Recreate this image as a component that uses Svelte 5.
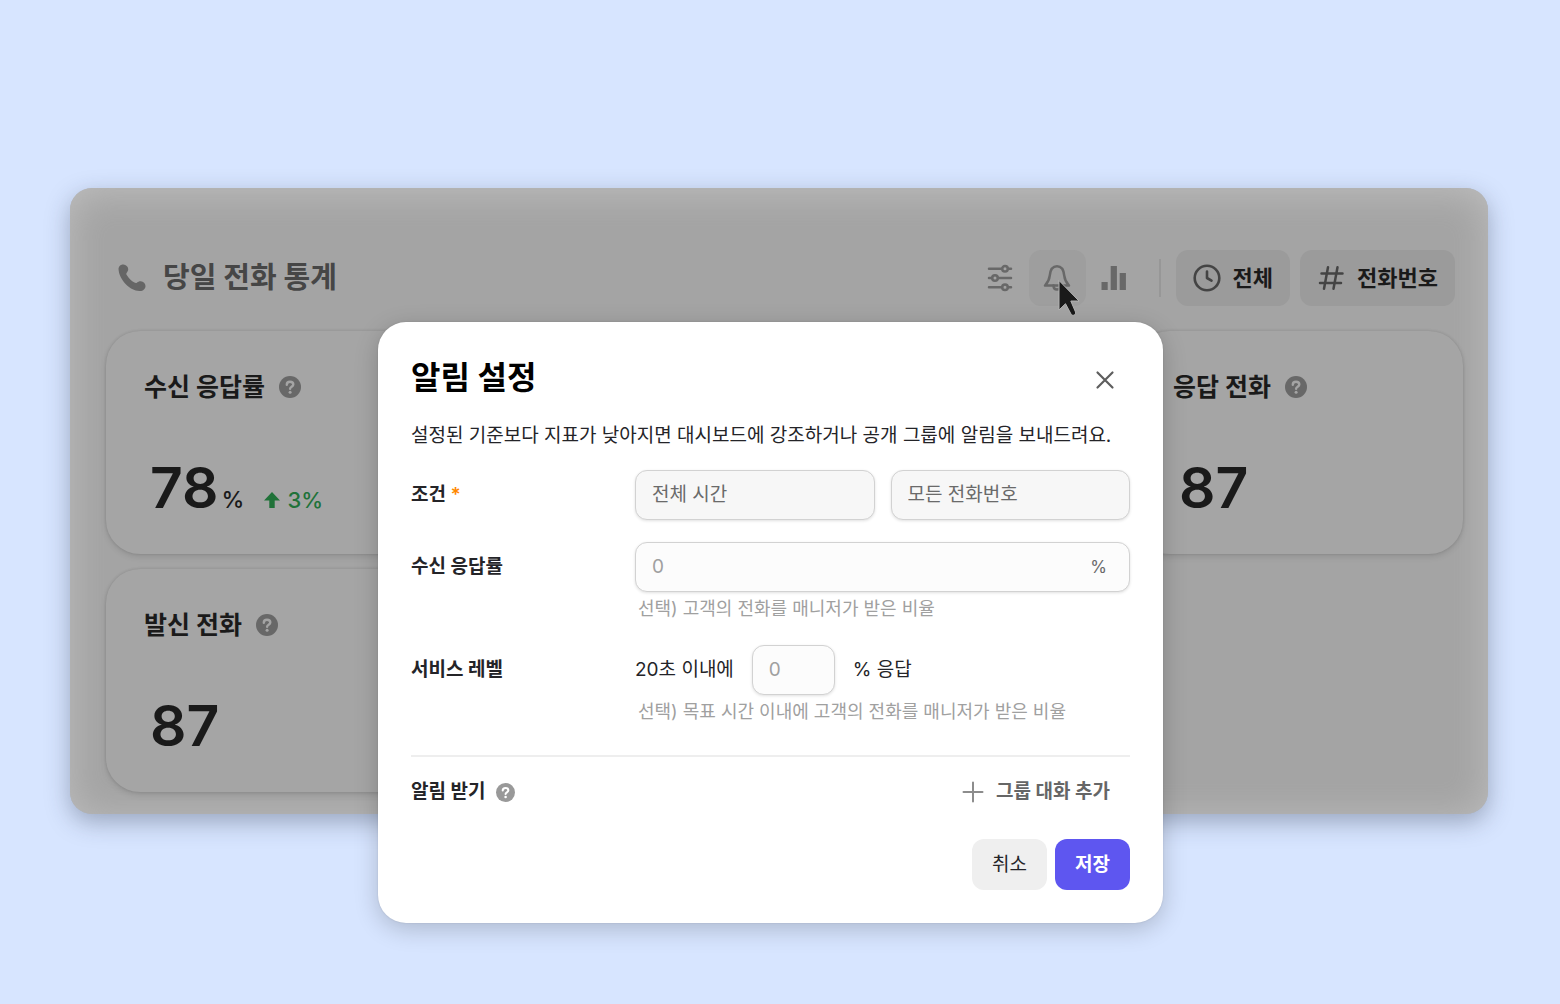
<script lang="ts">
  type Stat = { title: string; value: string; unit?: string; change?: string; column: number };

  const stats: Stat[] = [
    { title: "수신 응답률", value: "78", unit: "%", change: "3%", column: 1 },
    { title: "응답 전화", value: "87", column: 4 },
    { title: "발신 전화", value: "87", column: 1 },
  ];

  let answerRate = $state("");
  let serviceLevel = $state("");
</script>

{#snippet help()}
  <svg class="help" viewBox="0 0 22 22" aria-hidden="true">
    <circle cx="11" cy="11" r="11" fill="currentColor" />
    <path class="mark" d="M7.8 8.7C7.8 6.8 9.2 5.7 11 5.7s3.3 1.1 3.3 2.8c0 2.2-3.2 2.3-3.2 4.3" />
    <circle class="dot" cx="11.1" cy="16.2" r="1.5" />
  </svg>
{/snippet}

<main>
  <section class="board">
    <header>
      <h1>
        <svg width="28" height="28" viewBox="0 0 28 28" aria-hidden="true">
          <path
            fill="currentColor"
            d="M.6 6C.2 2.6 2.6.4 5.4.6c2.6.2 4.7 2.1 4.8 4.5.1 1.7-.7 2.6-1.6 3.9-.5.8-.3 1.4.3 2.3 2 3.1 4.5 5.6 7.5 7.3 1 .6 1.7.7 2.5.1 1.3-.9 2.2-1.5 3.9-1.4 2.6.2 4.7 2.2 4.7 4.8 0 3-2.5 5.2-6 5C11.5 26.5 1.5 15.8.6 6z"
          />
        </svg>
        당일 전화 통계
      </h1>
      <div class="tools">
        <button class="icon" aria-label="필터">
          <svg width="28" height="28" viewBox="0 0 28 28" fill="none" stroke="currentColor" stroke-width="2.5" stroke-linecap="round">
            <path d="M3 4.8h13M22 4.8h3M3 14h3M12 14h13M3 23.2h13M22 23.2h3" />
            <circle cx="19" cy="4.8" r="2.8" />
            <circle cx="9" cy="14" r="2.8" />
            <circle cx="19" cy="23.2" r="2.8" />
          </svg>
        </button>
        <button class="icon active" aria-label="알림 설정">
          <svg width="30" height="30" viewBox="0 0 30 30" fill="none" stroke="currentColor" stroke-width="2.5" stroke-linejoin="round" stroke-linecap="round">
            <path d="M3 22.5h24c-2.8-3-4.3-5.8-4.7-9.7C21.8 7.3 19.6 3.2 15 3.2s-6.8 4.1-7.3 9.6C7.3 16.7 5.8 19.5 3 22.5z" />
            <path d="M11.5 22.5c0 2.5 1.5 4 3.5 4s3.5-1.5 3.5-4" />
          </svg>
          <svg class="pointer" width="24" height="38" viewBox="0 0 24 38" aria-hidden="true">
            <path d="M2 1.5V31l6.5-6.3 5.6 10.5c1.7 2.3 5.2.6 4.4-2.2L13.8 22H22z" fill="#1a1a1a" stroke="#b4b4b4" stroke-width="1" />
          </svg>
        </button>
        <button class="icon" aria-label="통계">
          <svg width="28" height="28" viewBox="0 0 28 28" fill="currentColor">
            <path d="M1.5 18h6.2v8H1.5zM10.7 2h6.2v24h-6.2zM19.7 9h6.2v17h-6.2z" />
          </svg>
        </button>
        <span class="divider"></span>
        <button class="pill">
          <svg width="28" height="28" viewBox="0 0 28 28" fill="none" stroke="currentColor" stroke-width="2.6" stroke-linecap="round" stroke-linejoin="round">
            <circle cx="14" cy="14" r="12.3" />
            <path d="M14 7.5V14l4.5 2.6" />
          </svg>
          전체
        </button>
        <button class="pill">
          <svg width="28" height="28" viewBox="0 0 28 28" fill="none" stroke="currentColor" stroke-width="2.5" stroke-linecap="round">
            <path d="M11 3.2 7 24.8M20.5 3.2 16.5 24.8M4.5 9.5h21M3 19h21" />
          </svg>
          전화번호
        </button>
      </div>
    </header>

    <div class="cards">
      {#each stats as stat}
        <article style="grid-column: {stat.column}">
          <h2>{stat.title}{@render help()}</h2>
          <p class="figure">
            <span class="value">{stat.value}</span>
            {#if stat.unit}
              <span class="unit">{stat.unit}</span>
            {/if}
            {#if stat.change}
              <span class="change">
                <svg width="16" height="16" viewBox="0 0 16 16" aria-hidden="true">
                  <path d="M8 0l8 8.5h-5.3V16H5.3V8.5H0z" fill="currentColor" />
                </svg>
                {stat.change}
              </span>
            {/if}
          </p>
        </article>
      {/each}
    </div>
  </section>

  <div class="modal" role="dialog" aria-labelledby="modal-title">
    <div class="modal-head">
      <h2 id="modal-title">알림 설정</h2>
      <button class="close" aria-label="닫기">
        <svg width="20" height="20" viewBox="0 0 20 20" fill="none" stroke="currentColor" stroke-width="2.2" stroke-linecap="round">
          <path d="M2.5 2.5l15 15M17.5 2.5l-15 15" />
        </svg>
      </button>
    </div>
    <p class="intro">설정된 기준보다 지표가 낮아지면 대시보드에 강조하거나 공개 그룹에 알림을 보내드려요.</p>

    <form onsubmit={(event) => event.preventDefault()}>
      <div class="row">
        <label for="period">조건 <b>*</b></label>
        <div class="pair">
          <select id="period">
            <option>전체 시간</option>
          </select>
          <select aria-label="전화번호">
            <option>모든 전화번호</option>
          </select>
        </div>
      </div>

      <div class="row">
        <label for="rate">수신 응답률</label>
        <div>
          <div class="field">
            <input id="rate" type="text" placeholder="0" bind:value={answerRate} />
            <span>%</span>
          </div>
          <p class="hint">선택) 고객의 전화를 매니저가 받은 비율</p>
        </div>
      </div>

      <div class="row">
        <label for="level">서비스 레벨</label>
        <div>
          <div class="level">
            <span>20초 이내에</span>
            <div class="field small">
              <input id="level" type="text" placeholder="0" bind:value={serviceLevel} />
            </div>
            <span>% 응답</span>
          </div>
          <p class="hint">선택) 목표 시간 이내에 고객의 전화를 매니저가 받은 비율</p>
        </div>
      </div>

      <div class="receive">
        <h3>알림 받기{@render help()}</h3>
        <button class="add" type="button">
          <svg width="22" height="22" viewBox="0 0 22 22" fill="none" stroke="#8c8c8c" stroke-width="2" stroke-linecap="round">
            <path d="M11 1.5v19M1.5 11h19" />
          </svg>
          그룹 대화 추가
        </button>
      </div>

      <div class="actions">
        <button class="cancel" type="button">취소</button>
        <button class="save" type="submit">저장</button>
      </div>
    </form>
  </div>
</main>

<style>
  :global(body) {
    margin: 0;
    background: #d7e5ff;
  }

  main,
  main * {
    box-sizing: border-box;
  }

  main {
    position: relative;
    min-height: 100vh;
    padding: 188px 72px 80px 70px;
    font-family: Inter, "Noto Sans CJK KR", sans-serif;
    font-size: 19px;
    line-height: 28px;
    color: #242428;
  }

  h1,
  h2,
  h3,
  p {
    margin: 0;
  }

  svg {
    display: block;
    flex: none;
  }

  button,
  input,
  select {
    font: inherit;
    color: inherit;
  }

  button {
    border: none;
    background: none;
    padding: 0;
    cursor: pointer;
  }

  .board {
    padding: 62px 25px 22px 36px;
    border-radius: 22px;
    background: #a4a4a4;
    box-shadow:
      inset 0 4px 36px #bebebe,
      0 8px 24px rgba(40, 50, 70, 0.35);
    color: #1a1a1a;
  }

  header {
    display: flex;
    align-items: center;
    justify-content: space-between;
    padding: 0 8px 0 12px;
    margin-bottom: 25px;
  }

  h1 {
    display: flex;
    align-items: center;
    gap: 17px;
    font-size: 29px;
    line-height: 40px;
    font-weight: 700;
    color: #464646;
  }

  h1 svg {
    color: #666;
  }

  .tools {
    display: flex;
    align-items: center;
  }

  .icon {
    position: relative;
    display: flex;
    align-items: center;
    justify-content: center;
    width: 57px;
    height: 56px;
    border-radius: 12px;
    color: #686868;
  }

  .active {
    background: #9e9e9e;
  }

  .pointer {
    position: absolute;
    left: 28px;
    top: 29px;
  }

  .divider {
    width: 2px;
    height: 38px;
    margin: 0 15px 0 16px;
    background: #979797;
  }

  .pill {
    display: flex;
    align-items: center;
    gap: 12px;
    height: 56px;
    padding: 0 17px;
    border-radius: 12px;
    background: #9b9b9b;
    font-size: 22px;
    font-weight: 700;
  }

  .pill + .pill {
    margin-left: 10px;
  }

  .pill svg {
    color: #444;
  }

  .cards {
    display: grid;
    grid-template-columns: repeat(4, 1fr);
    gap: 15px;
  }

  article {
    height: 223px;
    padding: 36px 38px;
    border-radius: 34px;
    background: #a5a5a5;
    box-shadow:
      0 0 3px rgba(0, 0, 0, 0.14),
      0 3px 6px rgba(0, 0, 0, 0.1);
  }

  article h2 {
    display: flex;
    align-items: center;
    gap: 14px;
    font-size: 25px;
    line-height: 40px;
    font-weight: 700;
  }

  .help {
    width: 22px;
    height: 22px;
    color: #686868;
  }

  .mark {
    fill: none;
    stroke: #a4a4a4;
    stroke-width: 2.4;
    stroke-linecap: round;
  }

  .dot {
    fill: #a4a4a4;
  }

  .figure {
    display: flex;
    align-items: baseline;
    margin-top: 46px;
    padding-left: 6px;
    line-height: 70px;
  }

  .value {
    font-size: 57px;
    font-weight: 600;
  }

  .unit {
    margin-left: 3px;
    font-size: 23px;
    font-weight: 500;
  }

  .change {
    display: flex;
    align-items: center;
    gap: 7px;
    margin-left: 20px;
    font-size: 22px;
    line-height: 30px;
    font-weight: 500;
    color: #207239;
  }

  .modal {
    position: absolute;
    top: 322px;
    left: 0;
    right: 19px;
    width: 785px;
    margin: 0 auto;
    padding: 34px 33px 33px;
    border-radius: 28px;
    background: #fff;
    box-shadow:
      0 6px 24px rgba(0, 0, 0, 0.2),
      0 0 2px rgba(0, 0, 0, 0.12);
  }

  .modal-head {
    display: flex;
    align-items: center;
    justify-content: space-between;
  }

  .modal-head h2 {
    font-size: 32px;
    line-height: 44px;
    font-weight: 700;
    color: #000;
  }

  .close {
    padding: 15px;
    margin: -5px 0 -9px;
    color: #5e5e5e;
  }

  .intro {
    margin-top: 22px;
    white-space: nowrap;
  }

  form {
    margin-top: 20px;
  }

  .row {
    display: grid;
    grid-template-columns: 224px 1fr;
    margin-bottom: 22px;
  }

  label,
  h3 {
    font-size: 19px;
    font-weight: 700;
    line-height: 50px;
  }

  label b {
    font-weight: 600;
    color: #ff8800;
  }

  .pair {
    display: grid;
    grid-template-columns: 1fr 1fr;
    gap: 16px;
  }

  select,
  .field {
    width: 100%;
    height: 50px;
    padding: 0 16px;
    border: 1px solid #d2d2d2;
    border-radius: 12px;
    box-shadow: 0 1px 3px rgba(0, 0, 0, 0.12);
  }

  select {
    appearance: none;
    background: #f7f7f7;
    color: #6a6a6a;
  }

  .field {
    display: flex;
    align-items: center;
    padding-right: 22px;
    background: #fcfcfc;
    color: #6a6a6a;
  }

  .field input {
    flex: 1;
    min-width: 0;
    padding: 0;
    border: none;
    outline: none;
    background: none;
  }

  .field input::placeholder {
    color: #a0a0a0;
  }

  .field span {
    font-size: 17px;
  }

  .hint {
    margin-top: 3px;
    padding-left: 3px;
    font-size: 18px;
    color: #a0a0a0;
  }

  .level {
    display: flex;
    align-items: center;
    gap: 18px;
  }

  .level .small {
    width: 83px;
  }

  .receive {
    display: flex;
    align-items: center;
    justify-content: space-between;
    margin-top: 29px;
    padding: 10px 20px 0 0;
    border-top: 2px solid #eee;
  }

  h3 {
    display: flex;
    align-items: center;
    gap: 11px;
  }

  h3 .help {
    width: 19px;
    height: 19px;
    color: #999;
  }

  h3 .mark {
    stroke: #fff;
  }

  h3 .dot {
    fill: #fff;
  }

  .add {
    display: flex;
    align-items: center;
    gap: 12px;
    font-weight: 700;
    color: #666;
  }

  .actions {
    display: flex;
    justify-content: flex-end;
    gap: 8px;
    margin-top: 22px;
  }

  .cancel,
  .save {
    height: 51px;
    padding: 0 20px;
    border-radius: 12px;
  }

  .cancel {
    background: #efefef;
  }

  .save {
    background: #5e56f0;
    color: #fff;
    font-weight: 700;
  }
</style>
